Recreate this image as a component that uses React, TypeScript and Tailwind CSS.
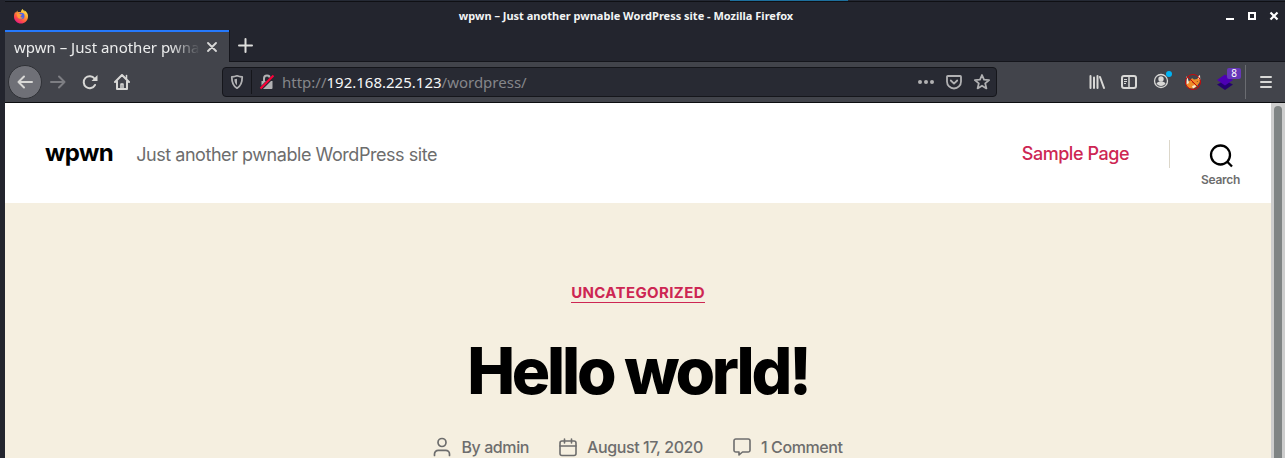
import type { ReactNode } from "react";

const WINDOW_TITLE = "wpwn – Just another pwnable WordPress site - Mozilla Firefox";

const FirefoxLogo = () => (
  <svg width="16" height="16" viewBox="0 0 16 16" aria-hidden="true">
    <defs>
      <linearGradient id="fox" x1="0.85" y1="0.05" x2="0.25" y2="1">
        <stop offset="0" stopColor="#fff44f" />
        <stop offset="0.35" stopColor="#ffa436" />
        <stop offset="0.7" stopColor="#ff4f45" />
        <stop offset="1" stopColor="#e31587" />
      </linearGradient>
    </defs>
    <path
      d="M9.5 1c1 1 1.5 1.8 2 2.8 0-.6-.1-1-.4-1.6C14 3.7 15.300 6.300 15 9c-.4 4-3.300 6.500-7 6.500S1 12.500 1 8.700C1 6.800 1.500 5 2.300 3.700l.5 1.400L4.300 2.600l.5 1.700c1-.4 2-.4 3 0C8 3 8.500 1.900 9.500 1z"
      fill="url(#fox)"
    />
    <circle cx="8.200" cy="8" r="3.300" fill="#4f62e8" />
    <path d="M4 5.500c1.300-.6 2.600-.2 3.500.7l1.800.2c-.3.9-1.500 1-1.700 1.800-.3 1 .8 1.700 2.200 1.200-.8 1.700-3.300 2-4.700.5C4 8.700 3.500 7 4 5.500z" fill="#ff9a36" />
  </svg>
);

const ShieldIcon = () => (
  <svg width="16" height="16" viewBox="0 0 16 16" fill="none" aria-hidden="true">
    <path d="M8 1.800c1.800.8 3.500 1.100 5.200 1.200 0 5.200-1 8.900-5.200 11.200C3.800 11.900 2.800 8.200 2.800 3c1.700-.1 3.400-.4 5.200-1.200z" stroke="#b1b1b3" strokeWidth="1.800" strokeLinejoin="round" />
    <path d="M8 4.700v6.500C6 9.600 5.500 7.600 5.400 5.200 6.300 5.100 7.200 5 8 4.700z" fill="#b1b1b3" />
  </svg>
);

const InsecureIcon = () => (
  <svg width="16" height="16" viewBox="0 0 16 16" fill="none" aria-hidden="true">
    <path d="M5 8V4.500a3 3 0 0 1 6 0V8" stroke="#b1b1b3" strokeWidth="2" />
    <path d="M2.500 7h11v7a1 1 0 0 1-1 1h-10z" fill="#b1b1b3" />
    <path d="M1 15.500L15 1.500" stroke="#282a33" strokeWidth="3.500" />
    <path d="M1.500 14.500L14.500 1.500" stroke="#ff0039" strokeWidth="2" />
  </svg>
);

const PocketIcon = () => (
  <svg width="16" height="16" viewBox="0 0 16 16" fill="none" stroke="#b1b1b3" strokeWidth="1.800" strokeLinecap="round" strokeLinejoin="round" aria-hidden="true">
    <path d="M1.800 2h12.400a.8.8 0 0 1 .8.800v4.700a7 7 0 0 1-14 0V2.800a.8.8 0 0 1 .8-.8z" />
    <path d="M4.800 6.500L8 9.600l3.200-3.100" />
  </svg>
);

const StarIcon = () => (
  <svg width="16" height="16" viewBox="0 0 16 16" fill="none" stroke="#b1b1b3" strokeWidth="1.800" strokeLinejoin="round" aria-hidden="true">
    <path d="M8 1l2 4.700 5.100.4-3.900 3.300 1.200 5L8 11.700l-4.400 2.700 1.200-5L.9 6.100 6 5.700z" />
  </svg>
);

const BackIcon = () => (
  <svg width="16" height="16" viewBox="0 0 16 16" fill="none" stroke="currentColor" strokeWidth="2" strokeLinecap="round" strokeLinejoin="round" aria-hidden="true">
    <path d="M15 8H1.500M7 2.500L1.500 8 7 13.500" />
  </svg>
);

const ForwardIcon = () => (
  <svg width="16" height="16" viewBox="0 0 16 16" fill="none" stroke="currentColor" strokeWidth="2" strokeLinecap="round" strokeLinejoin="round" aria-hidden="true">
    <path d="M1 8h13.500M9 2.500L14.500 8 9 13.500" />
  </svg>
);

const ReloadIcon = () => (
  <svg width="16" height="16" viewBox="0 0 16 16" fill="none" aria-hidden="true">
    <path d="M13 11a6 6 0 1 1-.5-6.500" stroke="currentColor" strokeWidth="2" strokeLinecap="round" />
    <path d="M15.500 1v6h-6z" fill="currentColor" />
  </svg>
);

const HomeIcon = () => (
  <svg width="16" height="16" viewBox="0 0 16 16" fill="none" stroke="currentColor" strokeWidth="2" strokeLinecap="round" strokeLinejoin="round" aria-hidden="true">
    <path d="M1 8l7-7 7 7M3 7.500V15h10V7.500" />
    <path d="M7 14.500V10h2v4.500" strokeWidth="1.500" />
    <path d="M12.500 1.500v3" strokeWidth="1.500" />
  </svg>
);

const LibraryIcon = () => (
  <svg width="16" height="16" viewBox="0 0 16 16" fill="none" stroke="currentColor" strokeWidth="2" strokeLinecap="round" aria-hidden="true">
    <path d="M1.500 2v12M5 3.500V14M8.500 2v12M11 3l4 11" />
  </svg>
);

const SidebarIcon = () => (
  <svg width="16" height="16" viewBox="0 0 16 16" fill="none" stroke="currentColor" aria-hidden="true">
    <rect x="1" y="2" width="14" height="12" rx="2" strokeWidth="2" />
    <path d="M8 2v12" strokeWidth="1.500" />
    <path d="M3 5.500h3M3 7.500h3M3 9.500h2" />
  </svg>
);

const AccountIcon = () => (
  <svg width="20" height="20" viewBox="0 0 20 20" fill="none" aria-hidden="true">
    <circle cx="9" cy="11" r="6.500" stroke="currentColor" strokeWidth="1.300" />
    <circle cx="9" cy="9" r="2.700" fill="currentColor" />
    <path d="M4.500 13.500c1-1.500 2.500-2 4.500-2s3.500.5 4.500 2c-1 1.500-2.500 2.500-4.500 2.500s-3.500-1-4.500-2.500z" fill="currentColor" />
    <circle cx="17" cy="4" r="3" fill="#00b3f4" />
  </svg>
);

const FoxyProxyIcon = () => (
  <svg width="18" height="18" viewBox="0 0 18 18" fill="none" aria-hidden="true">
    <path d="M2 12c0-2.500 2-4 4.500-4.500L8 5l2 1.500 3-.5 2.500-3 .5 5c-.3 1.500-1 2.200-1.800 3.200-1 2.300-3 3.800-5.200 4.300-3.500.5-6-1-7-3.500z" fill="#f08c28" />
    <path d="M14 3.500L16 2l.3 5-1.800-1zM2.500 3l1.500 3 1 4-2.500 1.500zM8 13l3-1 1 1.500-3 2z" fill="#f6ead2" />
    <path d="M8 9l2 .7-.7.8zM12.500 8.500l1.300-.5-.3 1z" fill="#4a2612" />
    <circle cx="9" cy="9" r="7.500" stroke="#cc0808" strokeWidth="1" />
    <path d="M3.700 3.700L14.300 14.300" stroke="#cc0808" />
  </svg>
);

const StackIcon = () => (
  <svg width="16" height="16" viewBox="0 0 16 16" aria-hidden="true">
    <path d="M0 10.500l8-4 8 4L8 16z" fill="#240070" />
    <path d="M0 6l8-5.500L16 6l-8 5.500z" fill="#4d00b4" />
  </svg>
);

const UserIcon = () => (
  <svg width="18" height="20" viewBox="0 0 18 20" fill="none" stroke="currentColor" strokeWidth="1.700" strokeLinecap="round" aria-hidden="true">
    <circle cx="9" cy="5.500" r="4" />
    <path d="M1.500 18.500V17c0-2.200 1.700-3.700 3.700-3.700h7.600c2 0 3.700 1.500 3.700 3.700v1.500" />
  </svg>
);

const CalendarIcon = () => (
  <svg width="18" height="20" viewBox="0 0 18 20" fill="none" stroke="currentColor" strokeWidth="1.600" strokeLinecap="round" aria-hidden="true">
    <rect x="1" y="4" width="16" height="14.500" rx="2" />
    <path d="M1 9h16M5.500 2v4M12.500 2v4" />
  </svg>
);

const CommentIcon = () => (
  <svg width="18" height="20" viewBox="0 0 18 20" fill="none" stroke="currentColor" strokeWidth="1.600" strokeLinejoin="round" aria-hidden="true">
    <path d="M2.800 2h12.400A1.800 1.800 0 0 1 17 3.800v9.400a1.800 1.800 0 0 1-1.800 1.800H9.500L6 18v-3H2.800A1.800 1.800 0 0 1 1 13.200V3.800A1.800 1.800 0 0 1 2.800 2z" />
  </svg>
);

const ToolButton = ({ label, children }: { label: string; children: ReactNode }) => (
  <button aria-label={label} className="flex size-8 shrink-0 items-center justify-center">
    {children}
  </button>
);

const TitleBar = () => (
  <header className="flex h-7 shrink-0 items-center gap-1 pl-2 pr-1">
    <FirefoxLogo />
    <h1 className="flex-1 text-center text-[11px] font-bold text-[#f2f4f4]">{WINDOW_TITLE}</h1>
    <div className="flex gap-2 text-white">
      <button aria-label="Minimize" className="flex size-3.5 items-center justify-center">
        <svg width="10" height="10" viewBox="0 0 10 10">
          <path d="M1 7h8v2H1z" fill="currentColor" />
        </svg>
      </button>
      <button aria-label="Maximize" className="flex size-3.5 items-center justify-center">
        <svg width="10" height="10" viewBox="0 0 10 10">
          <path d="M2 2h6v6H2z" fill="none" stroke="currentColor" strokeWidth="2" />
        </svg>
      </button>
      <button aria-label="Close window" className="flex size-3.5 items-center justify-center">
        <svg width="10" height="10" viewBox="0 0 10 10">
          <path d="M1.500 1.500l7 7M8.500 1.500l-7 7" stroke="currentColor" strokeWidth="2.200" />
        </svg>
      </button>
    </div>
  </header>
);

const TabBar = () => (
  <div className="flex h-8 shrink-0 items-center">
    <div className="flex h-8 w-56 items-center gap-1 border-t-2 border-[#2579fc] bg-[#42444b] pl-[9px] text-[#eceded]">
      <span className="w-[186px] overflow-hidden whitespace-nowrap text-[15px] [mask-image:linear-gradient(to_right,black_84%,transparent)]">
        wpwn – Just another pwnable WordPress site
      </span>
      <button aria-label="Close tab" className="flex size-4 items-center justify-center">
        <svg width="10" height="10" viewBox="0 0 10 10">
          <path d="M1 1l8 8M9 1l-8 8" stroke="#d8d8d8" strokeWidth="1.800" strokeLinecap="round" />
        </svg>
      </button>
    </div>
    <button aria-label="New tab" className="flex h-8 flex-1 items-center border-b border-l border-[#15161c] pl-2">
      <svg width="15" height="15" viewBox="0 0 15 15">
        <path d="M7.500 1v13M1 7.500h13" stroke="#dededc" strokeWidth="2" strokeLinecap="round" />
      </svg>
    </button>
  </div>
);

const Toolbar = () => (
  <div className="flex h-[41px] shrink-0 items-center border-b border-[#0c0d10] bg-[#42444b] text-[#d8d8d6]">
    <nav aria-label="Browser" className="flex w-[217px] shrink-0 items-center pl-[3px]">
      <button aria-label="Back" className="flex size-[34px] items-center justify-center rounded-full border border-[#2f3136] bg-[#6f7077]">
        <BackIcon />
      </button>
      <span className="text-[#7d7e83]">
        <ToolButton label="Forward">
          <ForwardIcon />
        </ToolButton>
      </span>
      <ToolButton label="Reload">
        <ReloadIcon />
      </ToolButton>
      <ToolButton label="Home">
        <HomeIcon />
      </ToolButton>
    </nav>
    <form className="flex h-[30px] min-w-0 flex-1 items-center rounded border border-[#15161b] bg-[#282a33]">
      <span className="flex h-6 w-[29px] items-center justify-center border-r border-[#15161b]">
        <ShieldIcon />
      </span>
      <span className="flex w-[30px] items-center justify-center">
        <InsecureIcon />
      </span>
      {/* the host is lit up, the rest of the address is dimmed */}
      <div className="flex flex-1 text-[15px] text-[#85868a]">
        <label htmlFor="host">http://</label>
        <input id="host" type="text" defaultValue="192.168.225.123" className="field-sizing-content bg-transparent text-[#f6f7f7] outline-none" />
        <span>/wordpress/</span>
      </div>
      <div className="flex gap-3 pr-[6px]">
        <button type="button" aria-label="Page actions">
          <svg width="16" height="16" viewBox="0 0 16 16" fill="#b1b1b3">
            <circle cx="2" cy="8" r="2" />
            <circle cx="8" cy="8" r="2" />
            <circle cx="14" cy="8" r="2" />
          </svg>
        </button>
        <button type="button" aria-label="Save to Pocket">
          <PocketIcon />
        </button>
        <button type="button" aria-label="Bookmark">
          <StarIcon />
        </button>
      </div>
    </form>
    <div className="flex w-72 shrink-0 items-center justify-end pr-[3px]">
      <ToolButton label="Library">
        <LibraryIcon />
      </ToolButton>
      <ToolButton label="Sidebars">
        <SidebarIcon />
      </ToolButton>
      <ToolButton label="Account">
        <span className="pb-1 pl-0.5">
          <AccountIcon />
        </span>
      </ToolButton>
      <ToolButton label="FoxyProxy">
        <FoxyProxyIcon />
      </ToolButton>
      <button aria-label="Wappalyzer" className="relative flex size-8 items-center justify-center">
        <StackIcon />
        <span className="absolute right-0 top-0.5 rounded-xs bg-[#6638b8] px-1 text-[10px] leading-[11px] text-white">8</span>
      </button>
      <div className="mx-1 h-[34px] w-px bg-[#6a6c71]" />
      <ToolButton label="Menu">
        <svg width="14" height="14" viewBox="0 0 14 14" stroke="currentColor" strokeWidth="2" strokeLinecap="round">
          <path d="M2 2h10M2 7h10M2 12h10" />
        </svg>
      </ToolButton>
    </div>
  </div>
);

const SiteHeader = () => (
  <header className="flex h-[100px] shrink-0 items-center justify-between bg-white pr-[31px] pl-10">
    <div className="flex items-baseline gap-[23px]">
      <a href="#home" className="text-2xl font-bold tracking-tight text-black">
        wpwn
      </a>
      <p className="text-lg tracking-tight text-[#6d6d6d]">Just another pwnable WordPress site</p>
    </div>
    <nav aria-label="Site" className="flex items-center pt-0.5">
      <a href="#sample" className="pr-10 text-lg font-medium tracking-tight text-[#cd2653]">
        Sample Page
      </a>
      <div className="h-7 w-px bg-[#dcd7ca]" />
      <button className="ml-[31px] flex flex-col items-center gap-1 pt-6 text-xs font-semibold tracking-tight text-[#6d6d6d]">
        <svg width="24" height="24" viewBox="0 0 24 24" fill="none" stroke="#000" strokeWidth="2.300" aria-hidden="true">
          <circle cx="11.500" cy="11" r="9.500" />
          <path d="M18 17.500l5 5" />
        </svg>
        Search
      </button>
    </nav>
  </header>
);

const Post = () => (
  <article className="flex flex-1 flex-col items-center bg-[#f5efe0] pt-20">
    <a href="#uncategorized" className="border-b border-[#cd2653] text-[15px] leading-[19px] font-bold tracking-wide text-[#cd2653] uppercase">
      Uncategorized
    </a>
    <h2 className="mt-8 text-[64px] leading-[72px] font-extrabold tracking-tighter text-black">Hello world!</h2>
    <ul className="mt-7 flex gap-[30px] text-base font-medium tracking-tight text-[#6d6d6d]">
      <li className="flex items-center gap-2.5">
        <UserIcon />
        <span>
          By <a href="#admin">admin</a>
        </span>
      </li>
      <li className="flex items-center gap-2.5">
        <CalendarIcon />
        <a href="#date">August 17, 2020</a>
      </li>
      <li className="flex items-center gap-2.5">
        <CommentIcon />
        <a href="#comments">1 Comment</a>
      </li>
    </ul>
  </article>
);

const App = () => {
  return (
    <div className="flex h-screen flex-col overflow-hidden bg-[#23252e] pl-[5px] font-['Noto_Sans',sans-serif]">
      {/* sliver of the desktop panel above the window */}
      <div className="flex h-0.5 shrink-0 justify-center border-b border-[#0f1014] bg-[#252a35]">
        <div className="ml-72 h-px w-[118px] bg-[#1d6f9c]" />
      </div>
      <TitleBar />
      <TabBar />
      <Toolbar />
      <div className="flex min-h-0 flex-1 font-['Inter',sans-serif]">
        <main className="flex min-w-0 flex-1 flex-col">
          <SiteHeader />
          <Post />
        </main>
        <div className="w-3.5 shrink-0 bg-[#cdcdcd] px-[3px] pt-[3px]">
          <div className="h-full rounded-t-full bg-[#7f8484]" />
        </div>
      </div>
    </div>
  );
};

export default App;
